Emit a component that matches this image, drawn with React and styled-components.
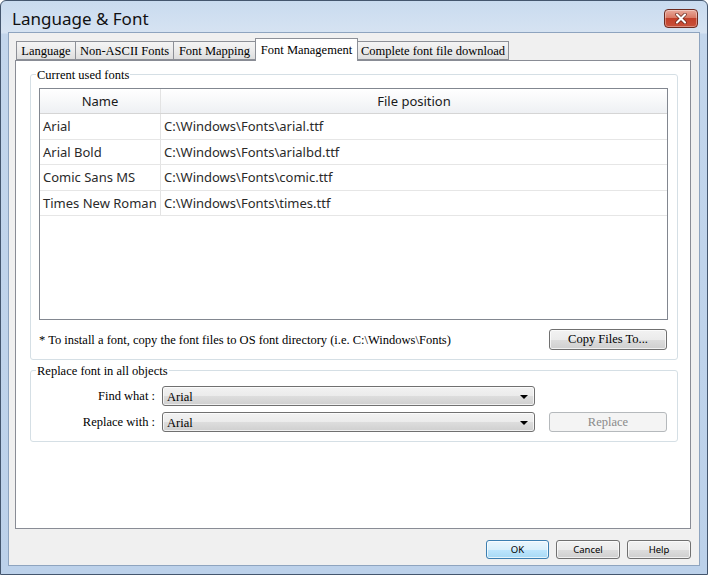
import React from 'react';
import styled, { createGlobalStyle } from 'styled-components';

const SERIF = '"Liberation Serif", "Times New Roman", serif';
const UI = '"Noto Sans", "Open Sans", sans-serif';

const GlobalStyle = createGlobalStyle`
  html, body {
    margin: 0;
    padding: 0;
    background: #ffffff;
  }
  * {
    box-sizing: border-box;
  }
`;

const Window = styled.div`
  width: 708px;
  height: 575px;
  display: flex;
  flex-direction: column;
  border: 1px solid #44566e;
  border-radius: 6px 6px 0 0;
  background: linear-gradient(180deg, #c9dbef 0px, #d6e3f2 32px, #c3d6ec 33px, #bcd1ea 100%);
  overflow: hidden;
`;

const TitleBar = styled.div`
  height: 31px;
  flex: none;
  display: flex;
  align-items: flex-start;
  justify-content: space-between;
  padding: 0 9px 0 11px;
`;

const Title = styled.div`
  font-family: ${UI};
  font-size: 17px;
  color: #111;
  line-height: 31px;
  padding-top: 2px;
`;

const CloseButton = styled.div`
  margin-top: 8px;
  width: 34px;
  height: 19px;
  border: 1px solid #6d2b20;
  border-radius: 4px;
  background: linear-gradient(180deg, #e9a99b 0%, #d97a66 45%, #c2402a 50%, #c9513a 100%);
  display: flex;
  align-items: center;
  justify-content: center;
  box-shadow: inset 0 0 0 1px rgba(255, 255, 255, 0.35);
`;

const Client = styled.div`
  flex: 1;
  margin: 0 7px 8px 7px;
  background: #f0f0f0;
  border: 1px solid #8ea4bf;
  display: flex;
  flex-direction: column;
  padding: 5px 8px 6px 6px;
`;

const TabStrip = styled.div`
  display: flex;
  align-items: flex-end;
  height: 22px;
  padding-left: 1px;
  position: relative;
  z-index: 1;
`;

const Tab = styled.div`
  width: ${p => p.$w}px;
  height: ${p => (p.$active ? 23 : 19)}px;
  margin: 0 -1px ${p => (p.$active ? -1 : 0)}px 0;
  border: 1px solid #8d9097;
  border-bottom: ${p => (p.$active ? 'none' : '1px solid #8d9097')};
  background: ${p => (p.$active ? '#ffffff' : 'linear-gradient(180deg, #f4f4f4 0%, #ebebeb 50%, #dedede 100%)')};
  font-family: ${SERIF};
  font-size: 12.5px;
  color: #000;
  display: flex;
  align-items: center;
  justify-content: center;
  white-space: nowrap;
  padding-top: ${p => (p.$active ? 0 : 1)}px;
  position: relative;
  z-index: ${p => (p.$active ? 2 : 1)};
`;

const Panel = styled.div`
  flex: 1;
  background: #ffffff;
  border: 1px solid #898c95;
  padding: 13px 12px 0 14px;
  display: flex;
  flex-direction: column;
`;

const Group = styled.div`
  position: relative;
  border: 1px solid #d5dfe5;
  border-radius: 3px;
  padding: ${p => p.$pad};
  margin-bottom: 10px;
  display: flex;
  flex-direction: column;
  gap: ${p => p.$gap || 0}px;
`;

const GroupLabel = styled.span`
  position: absolute;
  top: -8px;
  left: 5px;
  background: #ffffff;
  padding: 0 1px;
  font-family: ${SERIF};
  font-size: 12.5px;
  line-height: 16px;
  color: #000;
`;

const ListView = styled.div`
  height: 232px;
  border: 1px solid #828790;
  background: #fff;
  display: flex;
  flex-direction: column;
`;

const Row = styled.div`
  display: grid;
  grid-template-columns: 121px 1fr;
  height: ${p => (p.$header ? 25 : 25.5)}px;
  border-bottom: 1px solid ${p => (p.$header ? '#d5d5d5' : '#e6e6e6')};
  background: ${p => (p.$header ? 'linear-gradient(180deg, #ffffff 0%, #f7f8f9 50%, #eef0f3 100%)' : '#fff')};
  flex: none;
`;

const Cell = styled.div`
  font-family: ${UI};
  font-size: 13px;
  color: ${p => (p.$header ? '#1a1a1a' : '#2a2a2a')};
  display: flex;
  align-items: center;
  justify-content: ${p => (p.$header ? 'center' : 'flex-start')};
  padding-left: ${p => (p.$header ? 0 : 3)}px;
  white-space: nowrap;
  overflow: hidden;
  border-right: ${p => (p.$first ? '1px solid #e3e3e3' : 'none')};
`;

const NoteRow = styled.div`
  display: flex;
  align-items: center;
  justify-content: space-between;
  padding-right: 1px;
`;

const Note = styled.span`
  font-family: ${SERIF};
  font-size: 12.5px;
  color: #000;
  padding-top: 2px;
`;

const Button = styled.div`
  width: ${p => p.$w}px;
  height: ${p => p.$h}px;
  border: 1px solid ${p => (p.$disabled ? '#b5b9bc' : p.$default ? '#3c7fb1' : '#707070')};
  border-radius: 3px;
  background: ${p =>
    p.$disabled
      ? '#f4f4f4'
      : p.$default
      ? 'linear-gradient(180deg, #eaf6fd 0%, #d9f0fc 50%, #bee6fd 51%, #a7d9f5 100%)'
      : 'linear-gradient(180deg, #f2f2f2 0%, #ebebeb 50%, #dddddd 51%, #cfcfcf 100%)'};
  box-shadow: inset 0 0 0 1px ${p => (p.$disabled ? 'transparent' : 'rgba(255,255,255,0.7)')};
  font-family: ${p => (p.$ui ? UI : SERIF)};
  font-size: ${p => (p.$ui ? 9.5 : 12.5)}px;
  color: ${p => (p.$disabled ? '#8a8a8a' : '#000')};
  display: flex;
  align-items: center;
  justify-content: center;
  flex: none;
`;

const FieldRow = styled.div`
  display: flex;
  align-items: center;
`;

const FieldLabel = styled.span`
  width: 124px;
  text-align: right;
  font-family: ${SERIF};
  font-size: 12.5px;
  color: #000;
`;

const Select = styled.div`
  width: 373px;
  height: 20px;
  margin-left: 7px;
  margin-right: 14px;
  border: 1px solid #707070;
  border-radius: 3px;
  background: linear-gradient(180deg, #f2f2f2 0%, #ebebeb 50%, #dddddd 51%, #cfcfcf 100%);
  box-shadow: inset 0 0 0 1px rgba(255, 255, 255, 0.7);
  display: flex;
  align-items: center;
  justify-content: space-between;
  padding: 2px 6px 0 4px;
  font-family: ${SERIF};
  font-size: 12.5px;
  color: #000;
`;

const Arrow = styled.span`
  width: 0;
  height: 0;
  margin-top: -1px;
  border-left: 4px solid transparent;
  border-right: 4px solid transparent;
  border-top: 4px solid #000;
`;

const Footer = styled.div`
  display: flex;
  justify-content: flex-end;
  gap: 7px;
  padding-top: 11px;
`;

const tabs = [
  { label: 'Language', w: 60 },
  { label: 'Non-ASCII Fonts', w: 99 },
  { label: 'Font Mapping', w: 83 },
  { label: 'Font Management', w: 103, active: true },
  { label: 'Complete font file download', w: 152 },
];

const fonts = [
  ['Arial', 'C:\\Windows\\Fonts\\arial.ttf'],
  ['Arial Bold', 'C:\\Windows\\Fonts\\arialbd.ttf'],
  ['Comic Sans MS', 'C:\\Windows\\Fonts\\comic.ttf'],
  ['Times New Roman', 'C:\\Windows\\Fonts\\times.ttf'],
];

export default function App() {
  return (
    <>
      <GlobalStyle />
      <Window>
        <TitleBar>
          <Title>Language &amp; Font</Title>
          <CloseButton>
            <svg width="12" height="11" viewBox="0 0 12 11">
              <path d="M2 1.5 L10 9.5 M10 1.5 L2 9.5" stroke="#5a1a10" strokeWidth="3.4" strokeLinecap="round" />
              <path d="M2 1.5 L10 9.5 M10 1.5 L2 9.5" stroke="#ffffff" strokeWidth="2.2" strokeLinecap="round" />
            </svg>
          </CloseButton>
        </TitleBar>
        <Client>
          <TabStrip>
            {tabs.map(t => (
              <Tab key={t.label} $w={t.w} $active={t.active}>
                {t.label}
              </Tab>
            ))}
          </TabStrip>
          <Panel>
            <Group $pad="13px 9px 9px 8px" $gap={9}>
              <GroupLabel>Current used fonts</GroupLabel>
              <ListView>
                <Row $header>
                  <Cell $header $first>Name</Cell>
                  <Cell $header>File position</Cell>
                </Row>
                {fonts.map(([name, path]) => (
                  <Row key={name}>
                    <Cell $first>{name}</Cell>
                    <Cell>{path}</Cell>
                  </Row>
                ))}
              </ListView>
              <NoteRow>
                <Note>* To install a font, copy the font files to OS font directory (i.e. C:\Windows\Fonts)</Note>
                <Button $w={118} $h={21}>Copy Files To...</Button>
              </NoteRow>
            </Group>
            <Group $pad="15px 9px 9px 0" $gap={6}>
              <GroupLabel>Replace font in all objects</GroupLabel>
              <FieldRow>
                <FieldLabel>Find what :</FieldLabel>
                <Select>
                  Arial
                  <Arrow />
                </Select>
              </FieldRow>
              <FieldRow>
                <FieldLabel>Replace with :</FieldLabel>
                <Select>
                  Arial
                  <Arrow />
                </Select>
                <Button $w={118} $h={20} $disabled>Replace</Button>
              </FieldRow>
            </Group>
            <div style={{ flex: 1 }} />
          </Panel>
          <Footer>
            <Button $w={63} $h={19} $ui $default>OK</Button>
            <Button $w={64} $h={19} $ui>Cancel</Button>
            <Button $w={64} $h={19} $ui>Help</Button>
          </Footer>
        </Client>
      </Window>
    </>
  );
}
